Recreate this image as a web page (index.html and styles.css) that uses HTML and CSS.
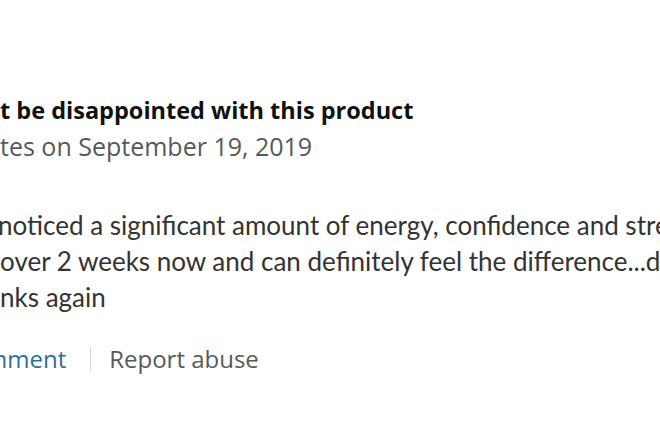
FILE: index.html
```html
<!DOCTYPE html>
<html>
<head>
<meta charset="utf-8">
<link rel="stylesheet" href="styles.css">
</head>
<body>
<div class="review">
  <div class="title">t be disappointed with this product</div>
  <div class="date">tes on September 19, 2019</div>
  <div class="body">
    <div class="line">noticed a significant amount of energy, confidence and strength</div>
    <div class="line">over 2 weeks now and can definitely feel the difference...definitely</div>
    <div class="line">nks again</div>
  </div>
  <div class="actions">
    <span class="link">mment</span>
    <span class="sep"></span>
    <span class="report">Report abuse</span>
  </div>
</div>
</body>
</html>
```
FILE: styles.css
```css
html, body {
  margin: 0;
  padding: 0;
  background: #ffffff;
  overflow: hidden;
}
.review {
  width: 660px;
  height: 433px;
  overflow: hidden;
  padding-top: 96px;
  box-sizing: border-box;
  font-family: "Open Sans", sans-serif;
}
.title {
  font-weight: 700;
  font-size: 23.5px;
  line-height: 28px;
  color: #0f1111;
  white-space: nowrap;
}
.date {
  margin-top: 8px;
  font-size: 25px;
  line-height: 28px;
  color: #565959;
  white-space: nowrap;
}
.body {
  margin-top: 47px;
  font-family: "Lato", sans-serif;
  font-size: 26px;
  line-height: 36px;
  color: #333333;
  white-space: nowrap;
}
.line:first-child { text-indent: -2px; }
.actions {
  margin-top: 30px;
  display: flex;
  align-items: center;
  font-size: 24px;
  line-height: 28px;
  white-space: nowrap;
}
.link {
  color: #2f6f9a;
  margin-left: -15px;
}
.sep {
  width: 1px;
  height: 26px;
  background: #dddddd;
  margin: 0 18px 0 24px;
}
.report {
  color: #565959;
}
```
